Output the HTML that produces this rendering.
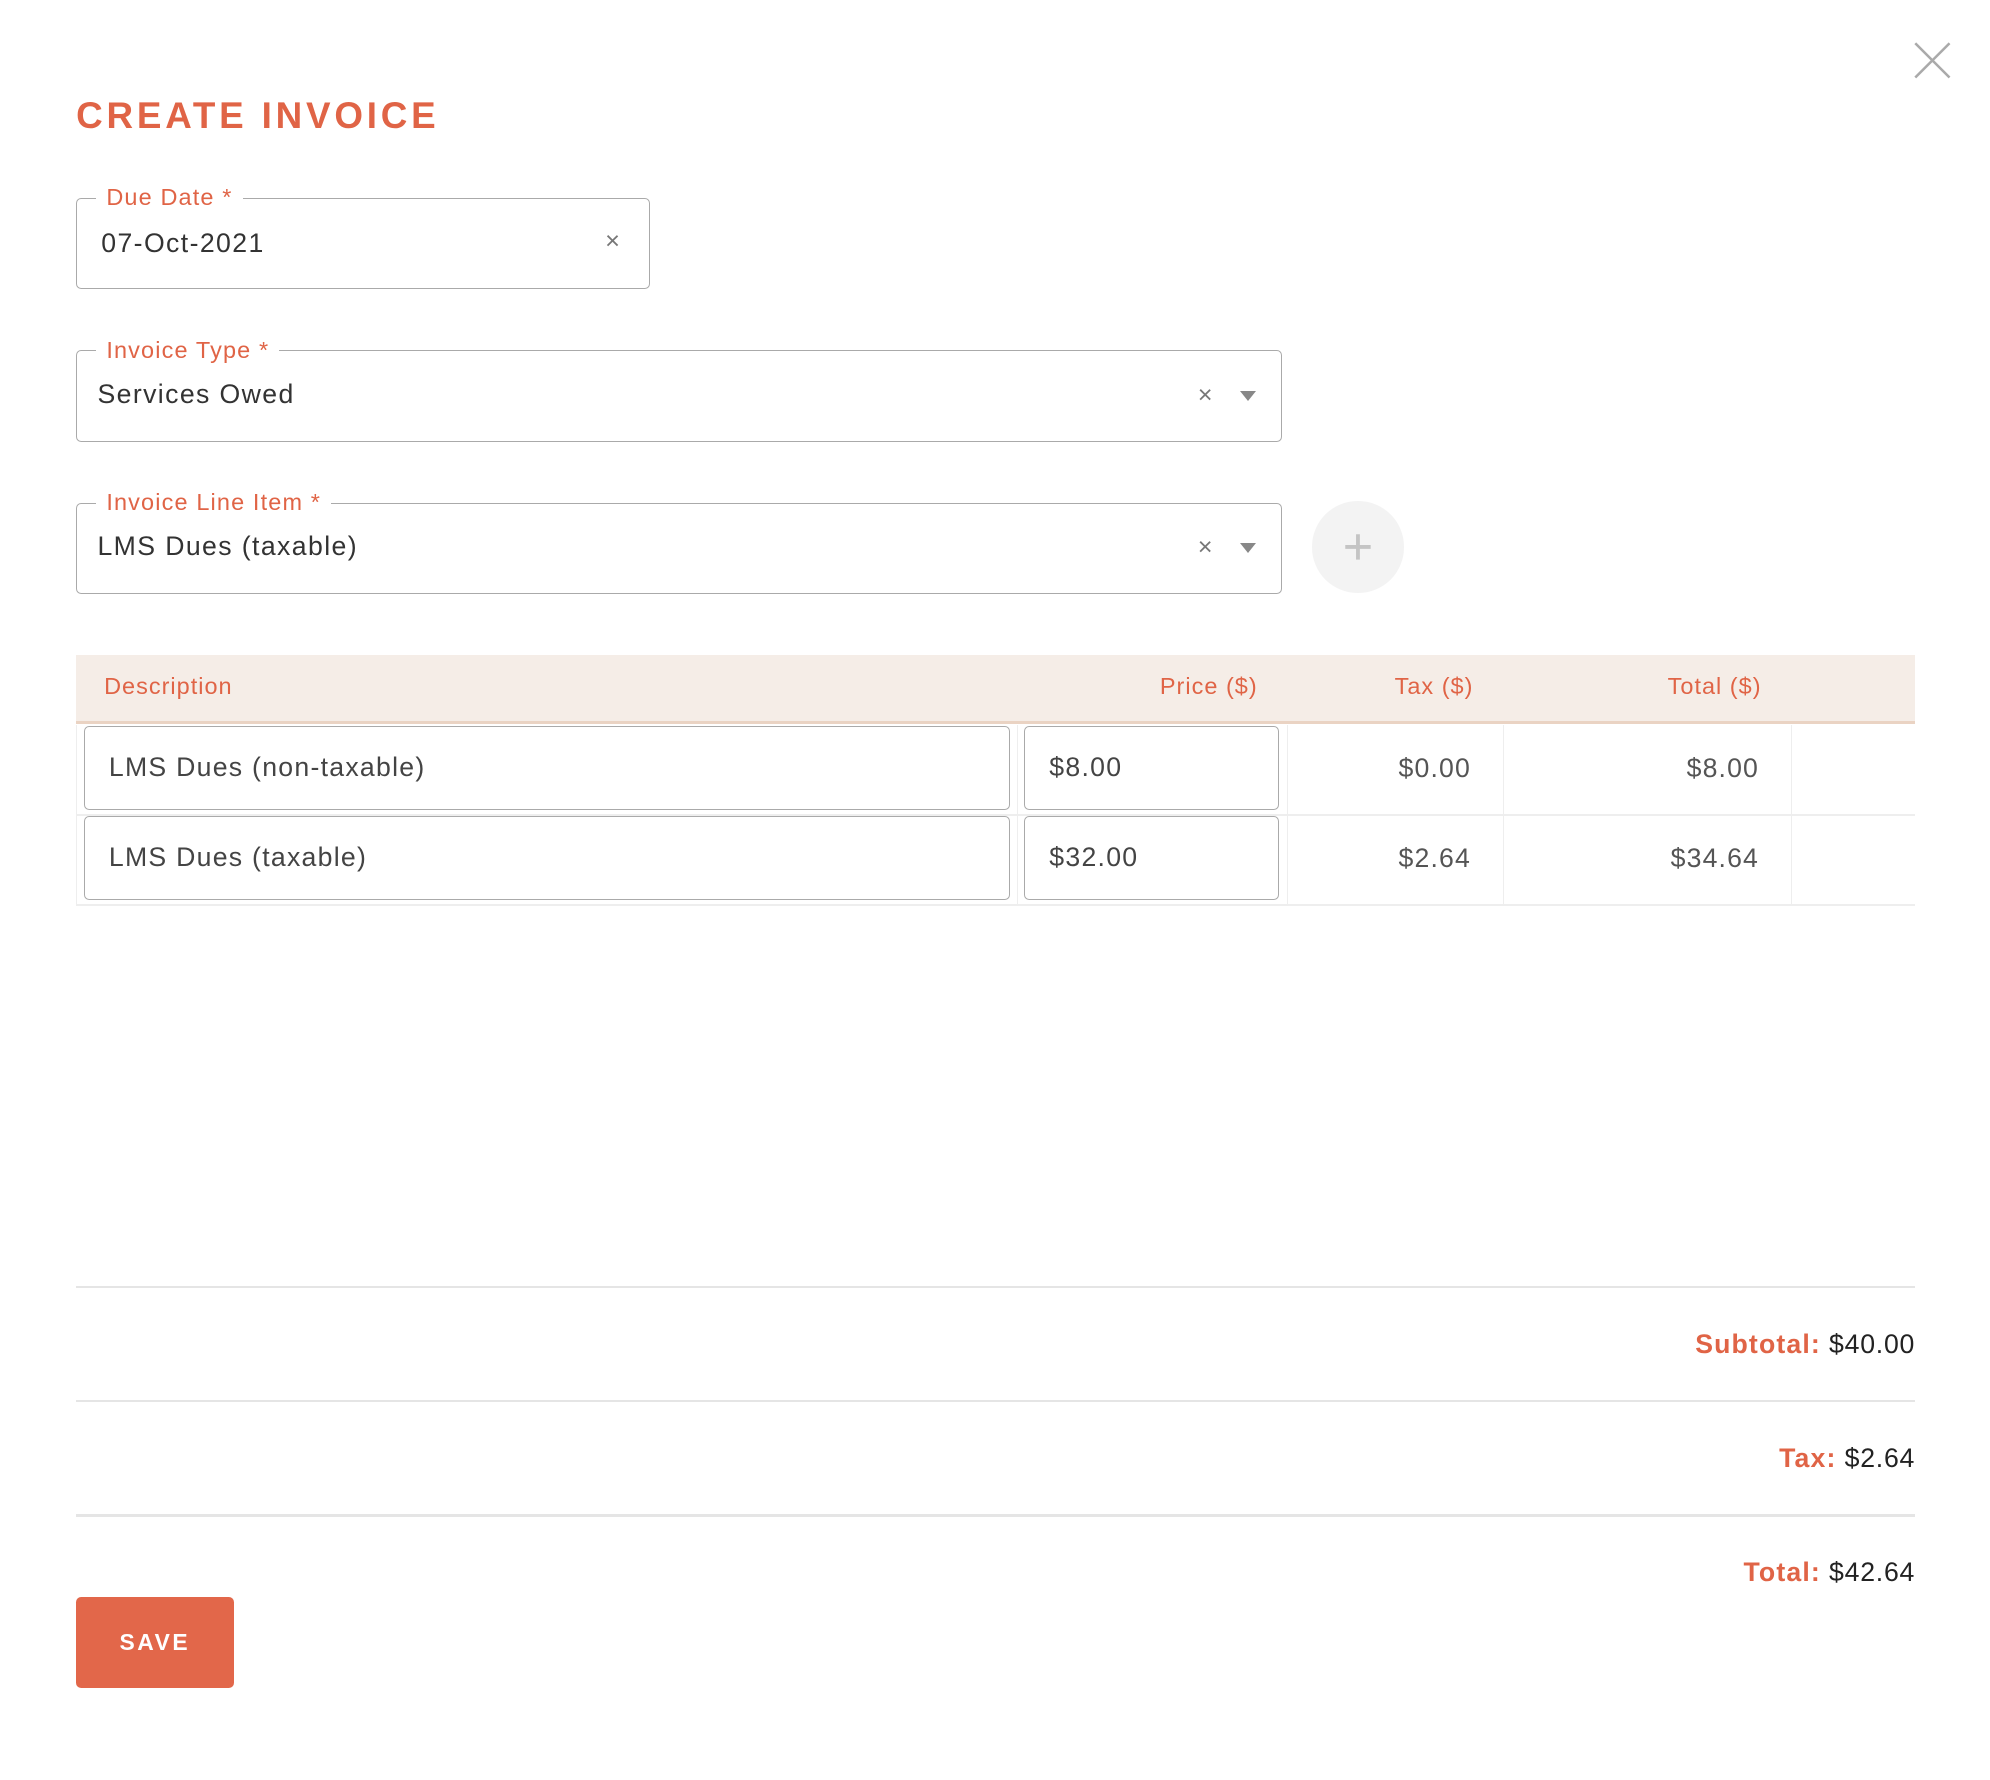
<!DOCTYPE html>
<html><head><meta charset="utf-8"><style>
html,body{margin:0;padding:0;background:#fff;width:1990px;height:1780px;overflow:hidden}
#w{zoom:1.26913;width:1568px;height:1403px;position:relative;font-family:"Liberation Sans",sans-serif;color:#333;letter-spacing:0.8px}
.a{position:absolute}
.f{position:absolute;border:1.5px solid #aaa;border-radius:4px;box-sizing:border-box}
.lg{position:absolute;top:-13px;left:15px;background:#fff;padding:0 8px;font-size:18.5px;color:#e06446;line-height:24px;letter-spacing:0.9px}
.v{position:absolute;font-size:21px;color:#333;line-height:24px;letter-spacing:1.1px}
.x{position:absolute;font-size:20px;color:#777;line-height:20px}
.tri{position:absolute;width:0;height:0;border-left:7px solid transparent;border-right:7px solid transparent;border-top:8px solid #888}
.h{position:absolute;top:530px;font-size:18.5px;color:#e06446;line-height:22px}
.in{position:absolute;border:1.5px solid #aaa;border-radius:4px;box-sizing:border-box;font-size:21px;line-height:24px;padding:20px 19px;color:#444;letter-spacing:1px}
.n{position:absolute;font-size:21px;color:#555;line-height:24px;text-align:right;letter-spacing:0.9px}
.hr{position:absolute;left:60px;width:1449px;height:2px;background:#e5e5e5}
.s{position:absolute;right:59px;font-size:21px;line-height:24px;color:#222;letter-spacing:0.6px}
.s b{color:#e06446;letter-spacing:0.9px}
</style></head><body><div id="w">
<svg class="a" style="left:1508px;top:33px" width="29" height="29" viewBox="0 0 29 29"><path d="M1 1L28 28M28 1L1 28" stroke="#aaa" stroke-width="2" fill="none"/></svg>
<div class="a" style="left:60px;top:74px;font-size:29px;font-weight:bold;letter-spacing:3px;color:#e06446;line-height:34px">CREATE INVOICE</div>

<div class="f" style="left:60px;top:156px;width:452px;height:72px"><div class="lg">Due Date *</div>
<div class="v" style="left:19px;top:23px">07-Oct-2021</div><div class="x" style="left:416px;top:24px">×</div></div>

<div class="f" style="left:60px;top:276px;width:950px;height:72px"><div class="lg">Invoice Type *</div>
<div class="v" style="left:16px;top:22px">Services Owed</div><div class="x" style="left:883px;top:25px">×</div><div class="tri" style="left:916px;top:31px"></div></div>

<div class="f" style="left:60px;top:396px;width:950px;height:72px"><div class="lg">Invoice Line Item *</div>
<div class="v" style="left:16px;top:22px">LMS Dues (taxable)</div><div class="x" style="left:883px;top:25px">×</div><div class="tri" style="left:916px;top:31px"></div></div>

<div class="a" style="left:1034px;top:395px;width:72px;height:72px;border-radius:50%;background:#f3f3f3"></div>
<svg class="a" style="left:1059px;top:420px" width="22" height="22"><path d="M11 1V21M1 11H21" stroke="#c4c4c4" stroke-width="3"/></svg>

<div class="a" style="left:60px;top:516px;width:1449px;height:52px;background:#f5ede7;border-bottom:3px solid #ead3c3"></div>
<div class="h" style="left:82px">Description</div>
<div class="h" style="right:577px">Price ($)</div>
<div class="h" style="right:407px">Tax ($)</div>
<div class="h" style="right:180px">Total ($)</div>

<div class="a" style="left:60px;top:571px;width:1px;height:142px;background:#eee"></div>
<div class="a" style="left:801px;top:571px;width:1px;height:142px;background:#eee"></div>
<div class="a" style="left:1014px;top:571px;width:1px;height:142px;background:#eee"></div>
<div class="a" style="left:1184px;top:571px;width:1px;height:142px;background:#eee"></div>
<div class="a" style="left:1411px;top:571px;width:1px;height:142px;background:#eee"></div>
<div class="a" style="left:60px;top:641px;width:1449px;height:2px;background:#eee"></div>
<div class="a" style="left:60px;top:712px;width:1449px;height:2px;background:#eee"></div>

<div class="in" style="left:66px;top:572px;width:730px;height:66px">LMS Dues (non-taxable)</div>
<div class="in" style="left:807px;top:572px;width:201px;height:66px">$8.00</div>
<div class="n" style="right:409px;top:593px">$0.00</div>
<div class="n" style="right:182px;top:593px">$8.00</div>
<div class="in" style="left:66px;top:643px;width:730px;height:66px">LMS Dues (taxable)</div>
<div class="in" style="left:807px;top:643px;width:201px;height:66px">$32.00</div>
<div class="n" style="right:409px;top:664px">$2.64</div>
<div class="n" style="right:182px;top:664px">$34.64</div>

<div class="hr" style="top:1013px"></div>
<div class="hr" style="top:1103px"></div>
<div class="hr" style="top:1193px"></div>
<div class="s" style="top:1047px"><b>Subtotal:</b> $40.00</div>
<div class="s" style="top:1137px"><b>Tax:</b> $2.64</div>
<div class="s" style="top:1227px"><b>Total:</b> $42.64</div>

<div class="a" style="left:60px;top:1258px;width:124px;height:72px;background:#e2674a;border-radius:4px;color:#fff;font-weight:bold;font-size:18px;letter-spacing:2px;text-align:center;line-height:72px">SAVE</div>
</div></body></html>
